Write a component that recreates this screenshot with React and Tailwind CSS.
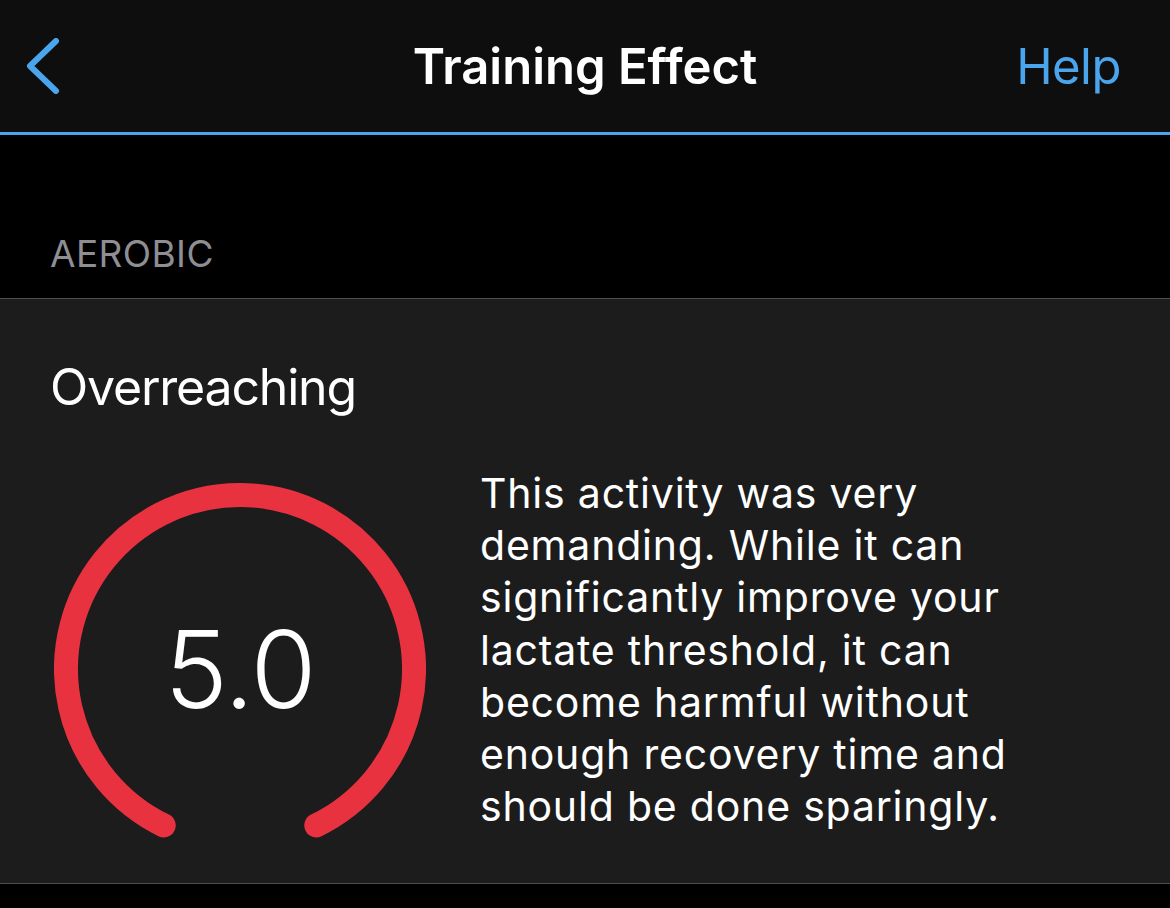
import React from 'react';

const font = { fontFamily: 'Inter, "Noto Sans", sans-serif' };

function Gauge({ value }) {
  // arc with a gap at the bottom, ends 26deg either side of straight down
  return (
    <div className="relative w-[372px] h-[372px] shrink-0">
      <svg width="372" height="372" viewBox="0 0 372 372" className="block">
        <path
          d="M109.7 342.4 A174 174 0 1 1 262.3 342.4"
          fill="none"
          stroke="#e9323f"
          strokeWidth="24"
          strokeLinecap="round"
        />
      </svg>
      <div className="absolute inset-0 flex items-center justify-center">
        <span className="text-white text-[107px] leading-none font-light tracking-[-1px]">{value}</span>
      </div>
    </div>
  );
}

export default function App() {
  return (
    <div className="w-[1170px] h-[908px] bg-black overflow-hidden" style={font}>
      {/* Header */}
      <header className="h-[135px] bg-[#0e0e0e] border-b-[3px] border-[#4aa5ec] relative flex items-center justify-between pl-[26px] pr-[49px]">
        <button className="w-[36px] h-[56px] flex items-center">
          <svg width="34" height="56" viewBox="0 0 34 56">
            <path
              d="M30 3 L4 28 L30 53"
              fill="none"
              stroke="#4aa5ec"
              strokeWidth="6"
              strokeLinecap="round"
              strokeLinejoin="round"
            />
          </svg>
        </button>
        <h1 className="absolute left-0 right-0 text-center text-white text-[49px] font-semibold leading-none pointer-events-none">
          Training Effect
        </h1>
        <span className="text-[#4aa5ec] text-[49px] leading-none tracking-[-0.5px]">Help</span>
      </header>

      {/* Section label */}
      <div className="h-[163px] flex items-end px-[50px] pb-[26px]">
        <span className="text-[#8e8e93] text-[37px] leading-none tracking-[0.4px]">AEROBIC</span>
      </div>

      {/* Card */}
      <section className="bg-[#1c1c1c] border-t border-b border-[#4f4f4f] pt-[63px] pb-[28px] px-[50px]">
        <h2 className="text-white text-[50px] leading-none tracking-[-1.2px]">Overreaching</h2>
        <div className="flex items-start mt-[55px]">
          <div className="mt-[16px] ml-[4px]">
            <Gauge value="5.0" />
          </div>
          <p className="ml-[54px] text-white text-[41px] leading-[52.2px] tracking-[0.8px]">
            This activity was very
            <br />
            demanding. While it can
            <br />
            significantly improve your
            <br />
            lactate threshold, it can
            <br />
            become harmful without
            <br />
            enough recovery time and
            <br />
            should be done sparingly.
          </p>
        </div>
      </section>
    </div>
  );
}
